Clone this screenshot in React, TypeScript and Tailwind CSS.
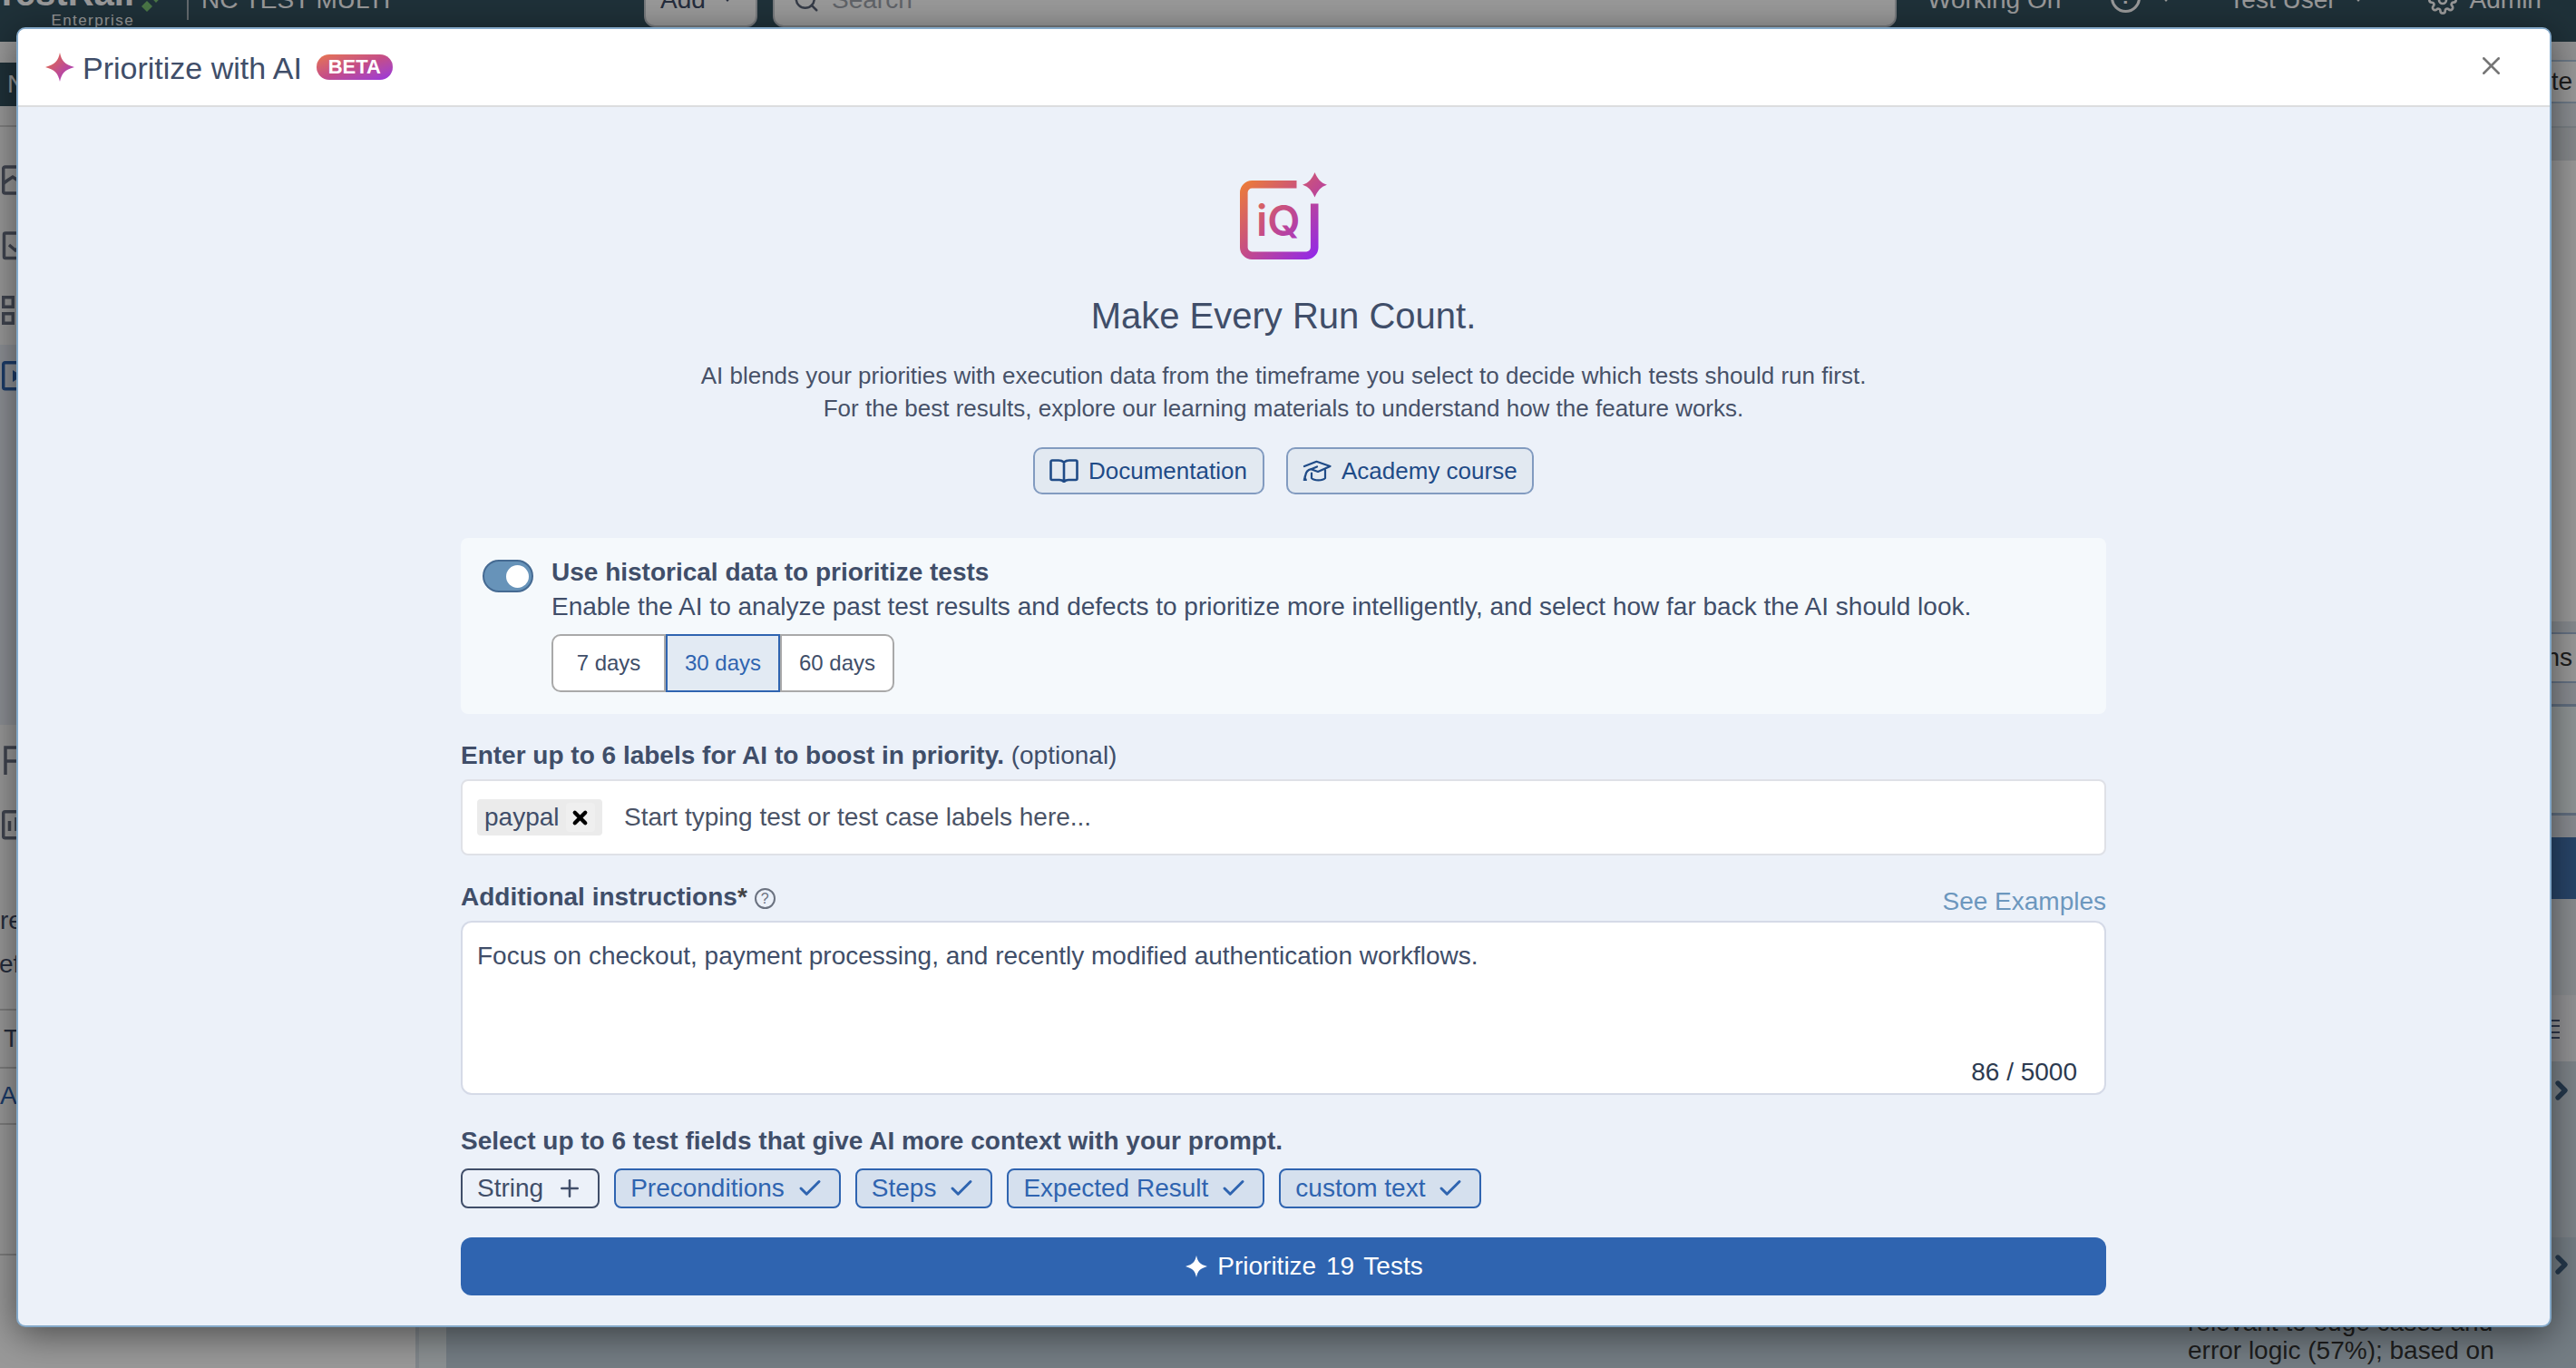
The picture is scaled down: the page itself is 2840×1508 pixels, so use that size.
import { Check, Plus, Search, X, ChevronRight } from 'lucide-react';
import { FiSettings } from 'react-icons/fi';

const TIMEFRAMES = ['7 days', '30 days', '60 days'];

const FIELDS = [
    { label: 'String', selected: false },
    { label: 'Preconditions', selected: true },
    { label: 'Steps', selected: true },
    { label: 'Expected Result', selected: true },
    { label: 'custom text', selected: true },
];

const Sparkle = ({ className, fill = 'currentColor' }: { className?: string; fill?: string }) => (
    <svg viewBox="0 0 32 32" className={className}>
        <defs>
            <linearGradient id="sparkle" x1="0" y1="0" x2="32" y2="32" gradientUnits="userSpaceOnUse">
                <stop offset="0.15" stopColor="#e0694f" />
                <stop offset="0.85" stopColor="#a93bc0" />
            </linearGradient>
        </defs>
        <path d="M16 0C18 9 21 13 32 16C21 19 18 23 16 32C14 23 11 19 0 16C11 13 14 9 16 0Z" fill={fill} />
    </svg>
);

const IqLogo = () => (
    <svg viewBox="0 0 96 96" className="w-24 h-24">
        <defs>
            <linearGradient id="iq" x1="4" y1="14" x2="84" y2="94" gradientUnits="userSpaceOnUse">
                <stop offset="0" stopColor="#ea7a3c" />
                <stop offset="0.5" stopColor="#c24a8c" />
                <stop offset="1" stopColor="#9128ea" />
            </linearGradient>
        </defs>
        <path
            d="M62.5 13.3H13.3a9 9 0 0 0-9 9V82.700a9 9 0 0 0 9 9H73.200a9 9 0 0 0 9-9V34.500"
            fill="none"
            stroke="url(#iq)"
            strokeWidth="8.6"
        />
        <path d="M82.500 0C85.500 7 89 11.500 96 13.800C89 16 85.500 20.500 82.500 27.600C79.500 20.500 76 16 69 13.800C76 11.500 79.500 7 82.500 0Z" fill="url(#iq)" />
        <text x="18" y="69.500" fill="url(#iq)" className="font-['Inter',sans-serif] font-semibold text-[47px]">iQ</text>
    </svg>
);

const Caret = () => (
    <svg viewBox="0 0 16 10" className="w-4 h-2.5 -mt-1" fill="currentColor">
        <path d="M0 0H16L8 9Z" />
    </svg>
);

const TopNav = () => (
    <header className="h-[92px] -mt-[46px] shrink-0 bg-[#355260] text-white text-[28px] leading-8 flex items-center">
        <div className="w-[206px] h-full flex">
            <div className="w-[148px] flex flex-col items-end">
                <span className="font-bold text-[40px] leading-9 mt-[20px]">TestRail</span>
                <span className="text-[17px] leading-5 mt-[3px] tracking-[1.4px]">Enterprise</span>
            </div>
            <svg viewBox="0 0 30 30" className="w-[30px] h-[30px] ml-2 mt-[29px]" fill="#7cc576">
                <path d="M6 18L12 24L6 30L0 24Z" />
                <path d="M16 9L21 14.500L16 20L11 14.500Z" />
            </svg>
        </div>
        <div className="w-[2px] h-[44px] bg-[#a7b1b8]" />
        <span className="ml-[14px] w-[488px]">NC TEST MULTI</span>
        <div className="w-[125px] h-[60px] rounded-xl bg-white border-2 border-[#c9cdd3] text-[#3f4b66] flex items-center gap-4 pl-4">
            Add <Caret />
        </div>
        <div className="ml-[17px] w-[1239px] h-[60px] rounded-xl bg-white border-2 border-[#c9cdd3] flex items-center gap-[13px] pl-5 text-[#a0a5ae]">
            <Search className="w-[30px] h-[30px] text-[#5a6478]" />
            Search
        </div>
        <span className="ml-[34px]">Working On</span>
        <div className="ml-[55px] w-[33px] h-[33px] mt-[-6px] rounded-full border-[3px] border-white flex items-center justify-center text-[22px] font-bold">?</div>
        <span className="ml-5"><Caret /></span>
        <span className="ml-[61px]">Test User</span>
        <span className="ml-[16px]"><Caret /></span>
        <FiSettings className="ml-[69px] w-8 h-8" />
        <span className="ml-[14px]">Admin</span>
    </header>
);

const SideNav = () => (
    <aside className="w-[458px] shrink-0 bg-white text-[28px] text-[#3f4b66] flex flex-col">
        <div className="mt-[23px] h-12 bg-[#355260] text-white pl-2 leading-[48px]">NC TEST MULTI</div>
        <div className="mt-[21px] h-[2px] bg-[#d5d5d5]" />
        <div className="h-[240px] pt-[42px] pl-[2px] text-[#6b7385]">
            <svg viewBox="0 0 34 180" className="w-[34px] h-[180px]" fill="none" stroke="currentColor" strokeWidth="3.500">
                <rect x="1.700" y="2" width="30" height="29" rx="2" />
                <path d="M2 20L6 17L12 13L18 17L30 8" />
                <path d="M18 75H4a1.500 1.500 0 0 0-1.500 1.500V101a1.500 1.500 0 0 0 1.500 1.500H30V75M8 88L15 94L24 86" />
                <path d="M1.700 145.700H12.300V156.300H1.700ZM1.700 163.700H12.300V174.300H1.700ZM19.700 145.700H30V156.300H19.700ZM19.700 163.700H30V174.300H19.700Z" />
            </svg>
        </div>
        <div className="h-[419px] bg-[#ecf0f8] pt-[18px] pl-[2px] text-[#2f64b0]">
            <svg viewBox="0 0 34 34" className="w-[34px] h-[34px]" fill="none" stroke="currentColor" strokeWidth="3.500">
                <rect x="1.700" y="1.700" width="30" height="29" rx="2" />
                <path d="M12 10V23L22 16.500Z" fill="currentColor" stroke="none" />
            </svg>
        </div>
        <div className="h-[184px] pt-[22px] pl-[2px] text-[#6b7385]">
            <svg viewBox="0 0 34 110" className="w-[34px] h-[110px]" fill="none" stroke="currentColor" strokeWidth="3.500">
                <path d="M4 33V3H28V18H4" />
                <rect x="1.700" y="73.700" width="30" height="29" rx="2" />
                <path d="M8.500 84V95M16 80V95M23 86V95" />
            </svg>
        </div>
        <div className="h-[129px] pt-[8px] leading-[48px]">
            <p>results</p>
            <p className="-ml-px">efforts</p>
        </div>
        <div className="border-y-2 border-[#d0d0d0] pl-1 leading-[62px] box-content h-[62px]">Tests</div>
        <div className="h-[62px] border-b-2 border-[#d0d0d0] text-[#2f64b0] leading-[60px]">AI Run</div>
        <div className="h-[144px] border-b-2 border-[#d0d0d0]" />
    </aside>
);

const MainArea = () => (
    <main className="flex-1 border-l-4 border-[#d6dfe8] bg-[#e8f0f4] flex flex-col text-[28px] text-[#333] text-right">
        <div className="h-5 bg-[#f2f2f3]" />
        <div className="h-12 border-y-2 border-[#b6cbe3] bg-white leading-[44px] pr-1">Update</div>
        <div className="h-[25px] bg-[#e6ebf2]" />
        <div className="h-[38px] border-t-2 border-[#cbd5de] bg-[#dfe4e9]" />
        <div className="h-[508px] bg-white" />
        <div className="h-3 bg-[#e1e8ef]" />
        <div className="h-14 border-y-2 border-[#a9bfdc] bg-white leading-[52px] pr-1">Columns</div>
        <div className="h-[23px] bg-[#e4eaf2]" />
        <div className="h-[123px] border-y-[3px] border-[#a3b9d6] bg-[#f0f9fb]" />
        <div className="h-6 bg-[#e4eaf2]" />
        <div className="h-[68px] bg-[#4474b0]" />
        <div className="h-[106px] bg-[#e6ebf0]" />
        <div className="h-[73px] bg-[#f5f6f8] flex justify-end pr-[18px] pt-[27px]">
            <div className="w-7 h-[21px] flex flex-col justify-between">
                <div className="h-[2px] bg-[#4f5d7d]" />
                <div className="h-[2px] bg-[#4f5d7d]" />
                <div className="h-[2px] bg-[#4f5d7d]" />
                <div className="h-[2px] bg-[#4f5d7d]" />
            </div>
        </div>
        <div className="h-[194px] ml-[30px] bg-[#d2dce5] flex justify-end pt-[16px]">
            <ChevronRight className="w-8 h-8 text-[#3f6080]" strokeWidth={4} />
        </div>
        <div className="h-[144px] ml-[30px] bg-[#c2d1dc] flex items-start justify-end pt-[14px]">
            <p className="w-[340px] mt-[65px] mr-[56px] text-left leading-[30.500px]">relevant to edge cases and error logic (57%); based on</p>
            <ChevronRight className="w-8 h-8 text-[#3f6080]" strokeWidth={4} />
        </div>
    </main>
);

const Intro = () => (
    <div className="flex flex-col items-center text-center">
        <IqLogo />
        <h2 className="mt-[38px] text-[40px] leading-[48px]">Make Every Run Count.</h2>
        <p className="mt-6 text-[26px] leading-9 text-[#475168]">
            AI blends your priorities with execution data from the timeframe you select to decide which tests should run first.
            <br />
            For the best results, explore our learning materials to understand how the feature works.
        </p>
        <div className="mt-[25px] flex gap-6 text-[26px] text-[#1f4b87]">
            <button className="h-[52px] w-[255px] flex items-center pl-4 gap-[11px] rounded-[10px] border-2 border-[#829bc0] bg-[#e2e9f1]">
                <svg viewBox="0 0 32 26" className="w-8 h-[26px]" fill="none" stroke="currentColor" strokeWidth="2.600" strokeLinejoin="round">
                    <path d="M16 3.500C14 1.800 12 1.500 10 1.500H3a1.500 1.500 0 0 0-1.500 1.500V21.500a1.500 1.500 0 0 0 1.500 1.500H11C13 23 14.500 23.500 16 25C17.500 23.500 19 23 21 23H29a1.500 1.500 0 0 0 1.500-1.500V3a1.500 1.500 0 0 0-1.500-1.500H22C20 1.500 18 1.800 16 3.500ZM16 3.500V24.500" />
                </svg>
                Documentation
            </button>
            <button className="h-[52px] w-[273px] flex items-center pl-4 gap-[11px] rounded-[10px] border-2 border-[#829bc0] bg-[#e2e9f1]">
                <svg viewBox="0 0 32 24" className="w-8 h-6" fill="none" stroke="currentColor" strokeWidth="2.200" strokeLinejoin="round" strokeLinecap="round">
                    <path d="M2 7L15.500 1.800L30.500 7L17 13L9.500 10.200L16 7.500M9.500 10.200C5.500 11 3.500 14 3 18M25 11V20C22 23.200 13 23.200 10 20V14.500" />
                    <path d="M2.600 17.500L4.500 22.500H1.500Z" fill="currentColor" strokeWidth="1" />
                </svg>
                Academy course
            </button>
        </div>
    </div>
);

const HistoryCard = () => (
    <div className="mt-12 h-[194px] rounded-lg bg-[#f5f9fc] pl-6 flex gap-5">
        <div className="mt-6 w-14 h-9 rounded-full bg-[#6793b9] border-2 border-[#456a92] flex items-center justify-end pr-[3px]">
            <div className="w-[25px] h-[25px] rounded-full bg-white" />
        </div>
        <div className="pt-[19px]">
            <p className="font-bold leading-[38px]">Use historical data to prioritize tests</p>
            <p className="leading-[38px]">
                Enable the AI to analyze past test results and defects to prioritize more intelligently, and select how far back the AI should look.
            </p>
            <div className="mt-[11px] flex text-2xl">
                {TIMEFRAMES.map((t) => (
                    <button
                        key={t}
                        className={`w-[126px] h-16 border-2 first:rounded-l-[10px] last:rounded-r-[10px] ${t === '30 days'
                                ? 'bg-[#e2eaf3] border-[#2f64b0] text-[#2f64b0]'
                                : 'bg-white border-[#a9a9a9]'
                            }`}
                    >
                        {t}
                    </button>
                ))}
            </div>
        </div>
    </div>
);

const PrioritizeModal = () => (
    <section className="w-[2795px] h-[1433px] rounded-[10px] border-2 border-[#84a9c9] bg-[#ecf1f9] overflow-hidden shadow-[0_8px_40px_rgba(0,0,0,0.5)] text-[28px] text-[#404e69]">
        <header className="h-[86px] bg-white border-b-2 border-[#dcdddf] flex items-center pl-[30px] pr-[54px]">
            <Sparkle className="w-[32px] h-[32px]" fill="url(#sparkle)" />
            <h1 className="ml-[9px] pt-0.5 text-[34px] leading-[42px]">Prioritize with AI</h1>
            <span className="ml-4 w-[84px] h-7 rounded-full bg-linear-to-br from-[#e8754a] via-[#c44c88] to-[#9a2ee0] text-white text-[22px] leading-7 font-bold text-center">BETA</span>
            <X className="ml-auto w-[33px] h-[33px] -mt-1 -mr-1.5 text-[#757575]" strokeWidth={1.8} />
        </header>

        <div className="w-[1814px] ml-[488px] pt-[72px]">
            <Intro />
            <HistoryCard />

            <p className="mt-[27px] leading-[38px]"><b>Enter up to 6 labels for AI to boost in priority.</b> (optional)</p>
            <div className="mt-[7px] h-[84px] rounded-lg border-2 border-[#dfe1e7] bg-white flex items-center pl-4 text-[#4a5366]">
                <span className="h-10 w-[138px] pl-2 rounded bg-[#ebebeb] text-[#404e69] flex items-center">
                    paypal
                    <span className="ml-[7px] w-8 h-8 rounded-sm bg-[#efefef] flex items-center justify-center">
                        <X className="w-[23px] h-[23px] text-black" strokeWidth={4.5} />
                    </span>
                </span>
                <span className="ml-6">Start typing test or test case labels here...</span>
            </div>

            <div className="mt-[27px] h-[45px] flex justify-between leading-[38px]">
                <div className="flex">
                    <b>Additional instructions<span className="text-[#444]">*</span></b>
                    <span className="ml-[8px] mt-[9px] w-[23px] h-[23px] rounded-full border-2 border-[#6b7280] text-[#6b7280] text-base leading-[19px] text-center">?</span>
                </div>
                <a className="self-end mb-[2px] text-[#6c97be]">See Examples</a>
            </div>
            <div className="h-48 rounded-xl border-2 border-[#d5dae7] bg-white px-4 pt-[18px] pb-[4px] flex flex-col justify-between leading-[38px]">
                <p>Focus on checkout, payment processing, and recently modified authentication workflows.</p>
                <p className="text-right pr-[14px] text-[#2c3a50]">86 / 5000</p>
            </div>

            <p className="mt-[32px] font-bold leading-[38px]">Select up to 6 test fields that give AI more context with your prompt.</p>
            <div className="mt-[11px] flex gap-4">
                {FIELDS.map((f) => (
                    <button
                        key={f.label}
                        className={`h-11 pl-4 pr-5 flex items-center rounded-lg border-2 ${f.selected
                                ? 'gap-4 bg-[#d5e0ee] border-[#2f64b0] text-[#2f64b0]'
                                : 'gap-[18px] border-[#404e69]'
                            }`}
                    >
                        {f.label}
                        {f.selected
                            ? <Check className="w-[30px] h-[30px] -mx-[3px]" strokeWidth={2.4} />
                            : <Plus className="w-[30px] h-[30px] -mx-[4px]" strokeWidth={2} />}
                    </button>
                ))}
            </div>

            <button className="mt-8 w-full h-16 pl-[46px] rounded-xl bg-[#2f64b0] text-white flex items-center justify-center gap-[11px] [word-spacing:3px]">
                <Sparkle className="w-6 h-6" />
                Prioritize 19 Tests
            </button>
        </div>
    </section>
);

export default function App() {
    return (
        <div className="relative w-[2840px] h-[1508px] overflow-hidden bg-white font-['Liberation_Sans',Arial,sans-serif]">
            <div className="h-full flex flex-col">
                <TopNav />
                <div className="flex-1 flex">
                    <SideNav />
                    <MainArea />
                </div>
            </div>
            <div className="absolute inset-0 bg-black/40 pt-[30px] pl-[18px]">
                <PrioritizeModal />
            </div>
        </div>
    );
}
